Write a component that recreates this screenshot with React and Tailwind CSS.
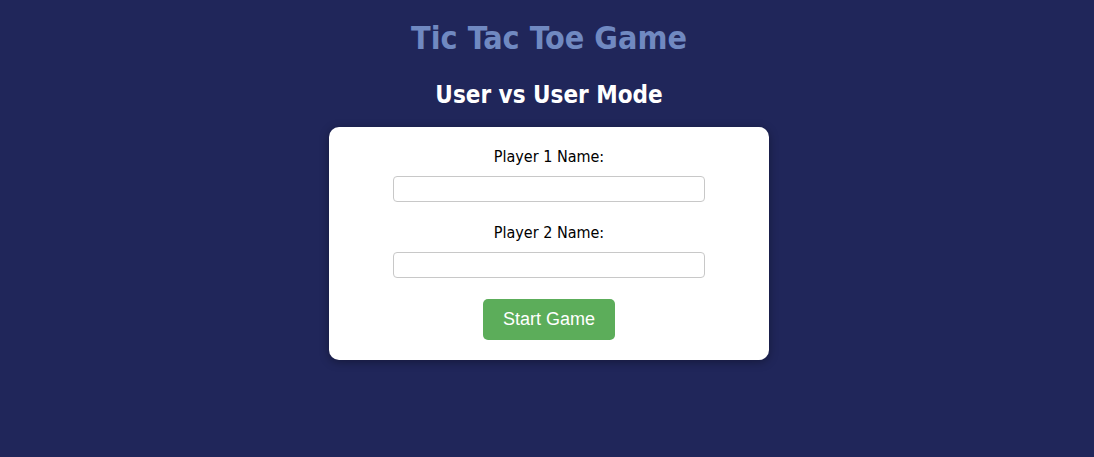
import React from 'react';

const font = { fontFamily: '"DejaVu Sans Condensed", "DejaVu Sans", sans-serif' };

const Field = ({ label, id }) => (
  <div className="flex flex-col items-center">
    <label htmlFor={id} className="text-[16px] leading-[19px] text-black mb-[10px]">
      {label}
    </label>
    <input
      id={id}
      type="text"
      className="w-[312px] h-[26px] border border-[#c8c8c8] rounded-[4px] px-2 text-sm outline-none bg-white"
    />
  </div>
);

const App = () => {
  return (
    <div className="min-h-screen w-full bg-[#20265a] flex flex-col items-center pl-[4px]" style={font}>
      <h1 className="text-[32px] leading-[38px] font-bold text-[#7089c1] mt-[19px]">
        Tic Tac Toe Game
      </h1>
      <h2 className="text-[24px] leading-[28px] font-bold text-white mt-[24px]">
        User vs User Mode
      </h2>

      <div className="w-[440px] bg-white rounded-[10px] shadow-[0_2px_10px_rgba(0,0,0,0.35)] mt-[18px] pt-[20px] pb-[20px] flex flex-col items-center">
        <Field label="Player 1 Name:" id="p1" />
        <div className="h-[21px]" />
        <Field label="Player 2 Name:" id="p2" />
        <button
          className="mt-[21px] w-[132px] h-[41px] bg-[#5cad5a] text-white rounded-[5px] text-[18px]"
          style={{ fontFamily: '"Liberation Sans", Arial, sans-serif' }}
        >
          Start Game
        </button>
      </div>
    </div>
  );
};

export default App;
